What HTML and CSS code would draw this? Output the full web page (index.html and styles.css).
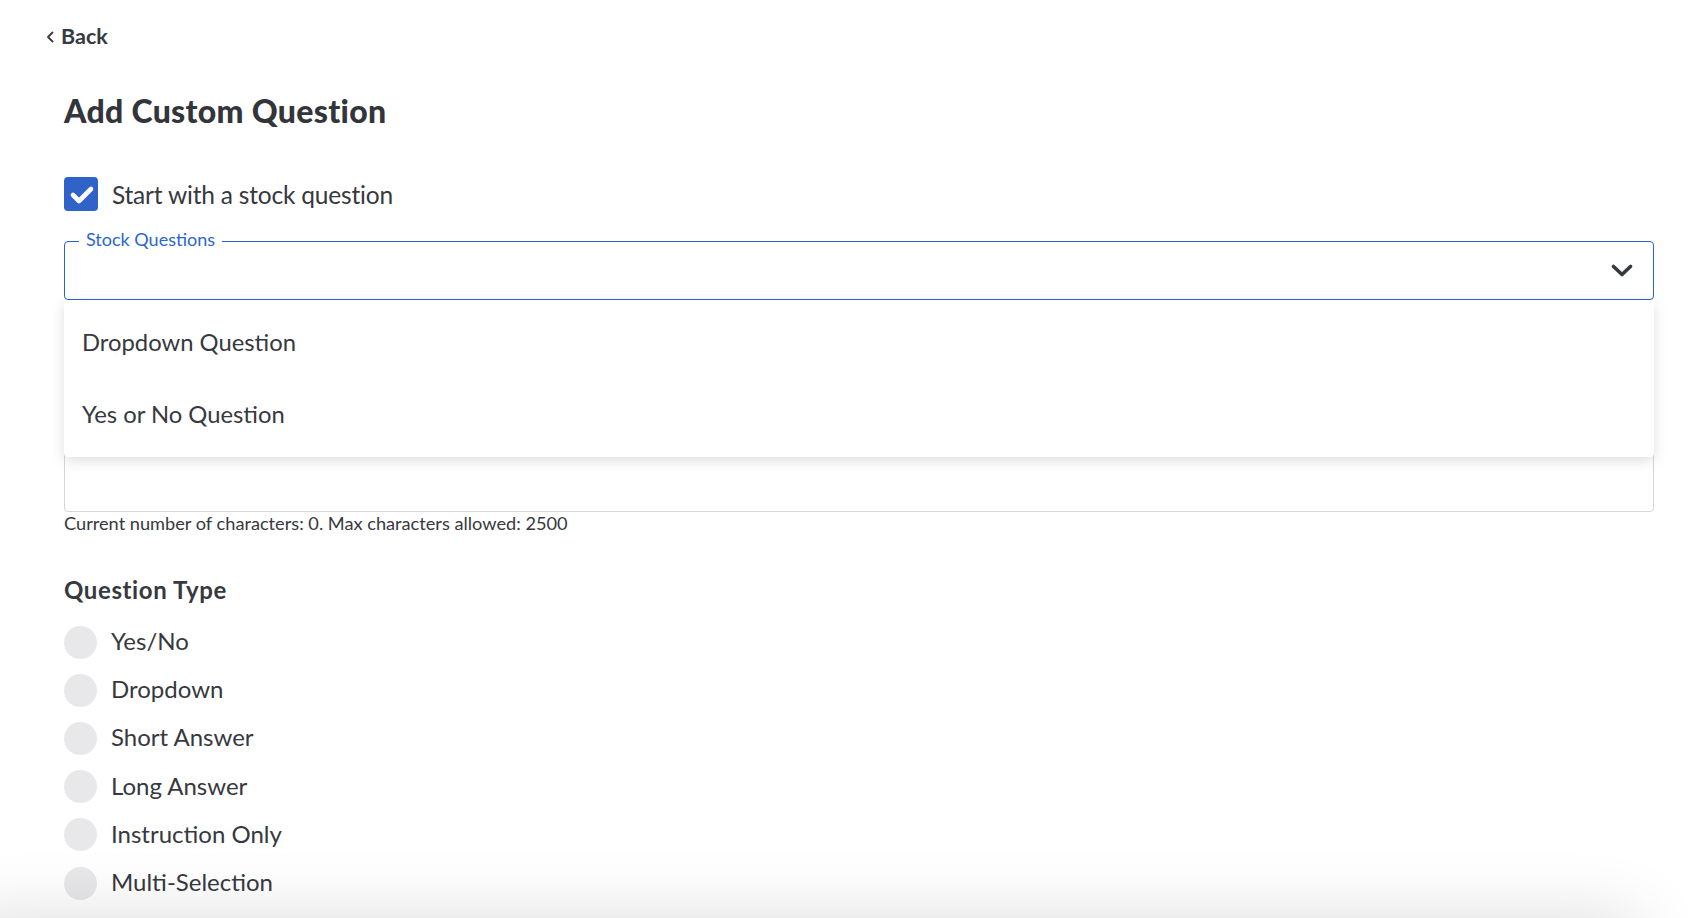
FILE: index.html
```html
<!DOCTYPE html>
<html lang="en">
<head>
<meta charset="utf-8">
<title>Add Custom Question</title>
<link rel="stylesheet" href="styles.css">
</head>
<body>
<div class="page">
  <a class="back" href="#">
    <svg class="back-icon" viewBox="0 0 8 12" width="8" height="12"><path d="M6.5 1.5 L2 6 L6.5 10.5" fill="none" stroke="currentColor" stroke-width="1.8" stroke-linecap="round" stroke-linejoin="round"/></svg>
    <span>Back</span>
  </a>

  <h1 class="title">Add Custom Question</h1>

  <label class="check-row">
    <span class="checkbox">
      <svg viewBox="0 0 34 34" width="34" height="34"><path d="M9 18 L15 24 L27 12" fill="none" stroke="#fff" stroke-width="4.6" stroke-linecap="round" stroke-linejoin="round"/></svg>
    </span>
    <span class="check-label">Start with a stock question</span>
  </label>

  <div class="field-group">
    <div class="select">
      <span class="select-label">Stock Questions</span>
      <svg class="select-caret" viewBox="0 0 22 13" width="22" height="13"><path d="M2.5 2.5 L11 10.5 L19.5 2.5" fill="none" stroke="currentColor" stroke-width="3.6" stroke-linecap="round" stroke-linejoin="round"/></svg>
    </div>
    <ul class="menu">
      <li class="menu-item">Dropdown Question</li>
      <li class="menu-item">Yes or No Question</li>
    </ul>
    <div class="textarea"></div>
  </div>
  <p class="help">Current number of characters: 0. Max characters allowed: 2500</p>

  <h2 class="section-title">Question Type</h2>
  <ul class="radios">
    <li class="radio-row"><span class="radio"></span><span class="radio-label">Yes/No</span></li>
    <li class="radio-row"><span class="radio"></span><span class="radio-label">Dropdown</span></li>
    <li class="radio-row"><span class="radio"></span><span class="radio-label">Short Answer</span></li>
    <li class="radio-row"><span class="radio"></span><span class="radio-label">Long Answer</span></li>
    <li class="radio-row"><span class="radio"></span><span class="radio-label">Instruction Only</span></li>
    <li class="radio-row"><span class="radio"></span><span class="radio-label">Multi-Selection</span></li>
  </ul>
</div>
<div class="footer-shade"></div>
</body>
</html>
```

FILE: styles.css
```css
* { box-sizing: border-box; }

html, body {
  margin: 0;
  padding: 0;
  background: #ffffff;
  overflow: hidden;
}

body {
  font-family: "Lato", "Liberation Sans", sans-serif;
  color: #36393e;
  height: 918px;
}

.page {
  padding: 23px 34px 0 64px;
}

.back {
  display: inline-flex;
  align-items: center;
  gap: 7px;
  margin-left: -18px;
  margin-top: 1px;
  height: 24px;
  font-size: 21.5px;
  font-weight: 700;
  color: #36393e;
  text-decoration: none;
}

.back-icon { display: block; margin-top: 2px; }

.title {
  margin: 43px 0 0;
  font-size: 32px;
  line-height: 40px;
  font-weight: 900;
  letter-spacing: 0.3px;
  color: #32353a;
}

.check-row {
  display: flex;
  align-items: center;
  gap: 14px;
  margin-top: 46px;
  height: 34px;
}

.checkbox {
  width: 34px;
  height: 34px;
  border-radius: 4px;
  background: #2f63c8;
  display: flex;
}

.check-label {
  font-size: 24.5px;
  letter-spacing: -0.2px;
  line-height: 34px;
  padding-top: 1px;
}

.field-group {
  position: relative;
  margin-top: 30px;
}

.select {
  position: relative;
  height: 59px;
  border: 1px solid #2b64c8;
  border-radius: 4px;
  display: flex;
  align-items: center;
  justify-content: flex-end;
  padding-right: 20px;
  color: #36393e;
}

.select-label {
  position: absolute;
  left: 14px;
  top: -14px;
  padding: 0 7px;
  background: #ffffff;
  font-size: 18px;
  line-height: 22px;
  color: #2b67cf;
}

.select-caret { display: block; }

.menu {
  position: absolute;
  top: 59px;
  left: 0;
  right: 0;
  z-index: 2;
  margin: 0;
  padding: 6px 0 7px;
  list-style: none;
  background: #ffffff;
  border-radius: 0 0 4px 4px;
  box-shadow: 0 4px 14px rgba(0, 0, 0, 0.13);
}

.menu-item {
  height: 72px;
  display: flex;
  align-items: center;
  padding: 0 0 1px 18px;
  font-size: 23.8px;
  color: #36393e;
}

.textarea {
  margin-top: 20px;
  height: 192px;
  border: 1px solid #d6d6d6;
  border-radius: 4px;
}

.help {
  margin: -1px 0 0;
  font-size: 18.2px;
  line-height: 24px;
  color: #36393e;
}

.section-title {
  margin: 41px 0 0;
  font-size: 24px;
  line-height: 28px;
  font-weight: 700;
  letter-spacing: 0.6px;
  color: #36393e;
}

.radios {
  list-style: none;
  margin: 14px 0 0;
  padding: 0;
}

.radio-row {
  display: flex;
  align-items: center;
  gap: 14px;
  height: 48.2px;
}

.radio {
  width: 33px;
  height: 33px;
  border-radius: 50%;
  background: #e8e8ea;
  flex: none;
}

.radio-label {
  font-size: 24px;
  line-height: 30px;
  padding-bottom: 2px;
}

.footer-shade {
  position: fixed;
  left: -40px;
  right: 50px;
  top: 918px;
  height: 100px;
  box-shadow: 0 0 70px rgba(0, 0, 0, 0.14);
  pointer-events: none;
}
```
